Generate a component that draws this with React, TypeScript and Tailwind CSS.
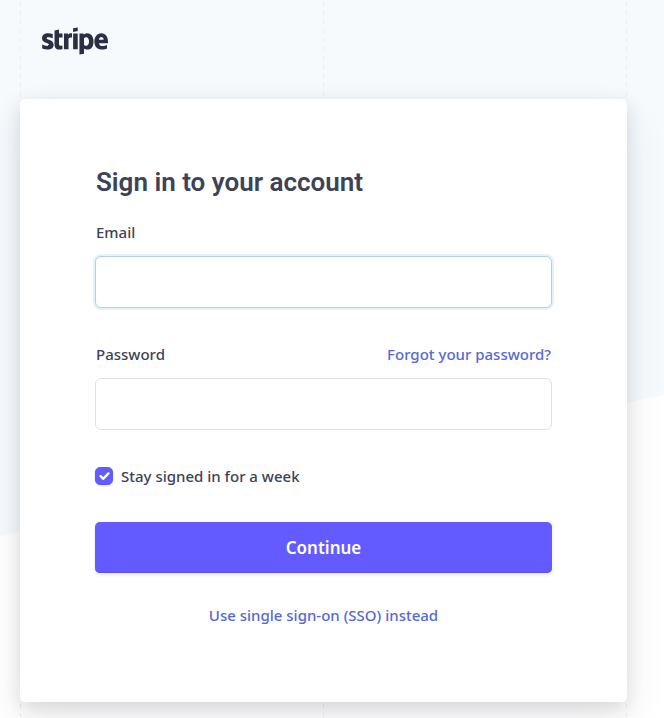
import { useState } from 'react';
import { FaStripe } from 'react-icons/fa';

const guideClass =
  'w-px bg-[repeating-linear-gradient(to_bottom,transparent_0_2px,#e9eef3_2px_6px,transparent_6px_9px)]';

const inputClass =
  'block h-[52px] w-full rounded-md border bg-white px-4 text-base text-[#3c4257] outline-none';

function Backdrop() {
  return (
    <div aria-hidden="true" className="absolute inset-0 overflow-hidden">
      <div className="h-[536px] origin-top-left -skew-y-12 bg-[#f6fafd]" />
      <div className="absolute inset-0 flex justify-between pr-[37px] pl-5">
        <span className={guideClass} />
        <span className={guideClass} />
        <span className={guideClass} />
      </div>
    </div>
  );
}

export default function App() {
  const [email, setEmail] = useState('');
  const [password, setPassword] = useState('');
  const [stay, setStay] = useState(true);

  return (
    <div className="relative min-h-screen bg-white font-['Noto_Sans',sans-serif] text-[#3c4257]">
      <Backdrop />

      <div className="relative pr-[37px] pb-4 pl-5">
        <header className="flex h-[99px] items-start pt-2 pl-[22px]">
          <a href="#" aria-label="Stripe" className="text-[#2a2f45]">
            <FaStripe size={66} />
          </a>
        </header>

        <main className="rounded-[5px] bg-white px-[75px] pt-[65px] pb-[75px] shadow-[0_19px_44px_rgba(60,66,87,0.08),0_6px_19px_rgba(0,0,0,0.12)]">
          <h1 className="px-px font-['Roboto',sans-serif] text-[26px] leading-9 font-semibold">
            Sign in to your account
          </h1>

          <form onSubmit={(e) => e.preventDefault()}>
            <div className="mt-5">
              <label htmlFor="email" className="mb-3 block px-px text-[15px] leading-6 font-medium">
                Email
              </label>
              <input
                id="email"
                type="email"
                value={email}
                onChange={(e) => setEmail(e.target.value)}
                className={`${inputClass} border-[#b3cfe2] shadow-[0_0_0_2px_#e6f1f8]`}
              />
            </div>

            <div className="mt-[34px]">
              <div className="mb-3 flex items-center justify-between px-px text-[15px] leading-6 font-medium">
                <label htmlFor="password">Password</label>
                <a href="#" className="text-[#5469d4]">
                  Forgot your password?
                </a>
              </div>
              <input
                id="password"
                type="password"
                value={password}
                onChange={(e) => setPassword(e.target.value)}
                className={`${inputClass} border-[#dfe1e5]`}
              />
            </div>

            <label className="mt-[34px] flex items-center gap-2 text-[15px] leading-6 font-medium">
              <span className="grid size-[18px]">
                <input
                  type="checkbox"
                  checked={stay}
                  onChange={(e) => setStay(e.target.checked)}
                  className="peer col-start-1 row-start-1 size-[18px] appearance-none rounded-[5px] border border-[#dfe1e5] bg-white shadow-sm checked:border-[#635bff] checked:bg-[#635bff]"
                />
                <svg
                  viewBox="0 0 18 18"
                  className="pointer-events-none col-start-1 row-start-1 hidden size-[18px] peer-checked:block"
                  fill="none"
                  stroke="white"
                  strokeWidth="2.4"
                  strokeLinecap="round"
                  strokeLinejoin="round"
                >
                  <path d="M5.6 9.2 8.3 11.8 13.4 6.4" />
                </svg>
              </span>
              Stay signed in for a week
            </label>

            <button
              type="submit"
              className="mt-[34px] block h-[51px] w-full rounded-[5px] bg-[#635bff] text-[17px] font-semibold text-white shadow-[inset_0_-1px_0_#5b52ea,0_2px_4px_rgba(60,66,87,0.12)]"
            >
              Continue
            </button>
          </form>

          <p className="mt-[30px] text-center text-[15px] leading-6 font-medium">
            <a href="#" className="text-[#5469d4]">
              Use single sign-on (SSO) instead
            </a>
          </p>
        </main>
      </div>
    </div>
  );
}
